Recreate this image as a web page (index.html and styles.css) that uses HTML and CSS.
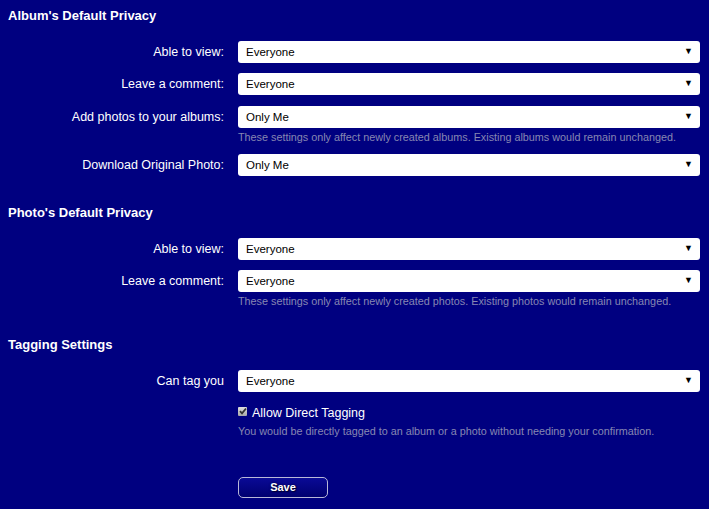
FILE: index.html
```html
<!DOCTYPE html>
<html>
<head>
<meta charset="utf-8">
<link rel="stylesheet" href="styles.css">
</head>
<body>
<div class="page">
  <section class="section">
    <h2 class="title">Album's Default Privacy</h2>
    <div class="form">
      <div class="label">Able to view:</div>
      <div class="field"><div class="select"><span>Everyone</span><span class="arrow">▼</span></div></div>
      <div class="label">Leave a comment:</div>
      <div class="field"><div class="select"><span>Everyone</span><span class="arrow">▼</span></div></div>
      <div class="label">Add photos to your albums:</div>
      <div class="field"><div class="select"><span>Only Me</span><span class="arrow">▼</span></div>
        <div class="help">These settings only affect newly created albums. Existing albums would remain unchanged.</div></div>
      <div class="label">Download Original Photo:</div>
      <div class="field"><div class="select"><span>Only Me</span><span class="arrow">▼</span></div></div>
    </div>
  </section>
  <section class="section">
    <h2 class="title">Photo's Default Privacy</h2>
    <div class="form">
      <div class="label">Able to view:</div>
      <div class="field"><div class="select"><span>Everyone</span><span class="arrow">▼</span></div></div>
      <div class="label">Leave a comment:</div>
      <div class="field"><div class="select"><span>Everyone</span><span class="arrow">▼</span></div>
        <div class="help">These settings only affect newly created photos. Existing photos would remain unchanged.</div></div>
    </div>
  </section>
  <section class="section">
    <h2 class="title">Tagging Settings</h2>
    <div class="form">
      <div class="label">Can tag you</div>
      <div class="field"><div class="select"><span>Everyone</span><span class="arrow">▼</span></div></div>
      <div class="label"></div>
      <div class="field">
        <div class="check-row"><span class="checkbox"><svg width="8" height="8" viewBox="0 0 8 8"><path d="M1 4.2 L3 6.3 L7 1.5" fill="none" stroke="#333" stroke-width="1.8"/></svg></span><span>Allow Direct Tagging</span></div>
        <div class="help help-check">You would be directly tagged to an album or a photo without needing your confirmation.</div>
      </div>
    </div>
  </section>
  <div class="actions">
    <button class="save">Save</button>
  </div>
</div>
</body>
</html>
```
FILE: styles.css
```css
html, body {
  margin: 0;
  padding: 0;
  background: #000080;
}
body {
  font-family: "Liberation Sans", Arial, sans-serif;
  color: #ffffff;
}
.page {
  padding: 8px 9px 0 8px;
}
.section {
  margin-bottom: 29px;
}
.title {
  margin: 0 0 16.5px 0;
  font-size: 13px;
  font-weight: bold;
  line-height: 16px;
  color: #ffffff;
}
.form {
  display: grid;
  grid-template-columns: 216px 1fr;
  column-gap: 14px;
  row-gap: 10.5px;
}
.label {
  text-align: right;
  font-size: 12.5px;
  line-height: 22px;
  color: #ffffff;
}
.select {
  position: relative;
  height: 22px;
  background: #ffffff;
  border-radius: 3px;
  color: #000000;
  font-size: 11.5px;
  line-height: 22px;
  padding-left: 8px;
}
.arrow {
  position: absolute;
  right: 7px;
  top: 0;
  font-size: 9px;
  line-height: 21px;
  color: #000;
}
.help {
  margin-top: 2px;
  font-size: 10.8px;
  line-height: 14px;
  color: #8787b2;
}
.help-check {
  margin-top: 3px;
}
.check-row {
  display: flex;
  align-items: center;
  gap: 5px;
  margin-top: 2.5px;
  font-size: 12.5px;
  line-height: 16px;
  color: #ffffff;
}
.checkbox {
  width: 9px;
  height: 9px;
  background: linear-gradient(#e0e0e0, #a8a8a8);
  border-radius: 1px;
  display: flex;
  align-items: center;
  justify-content: center;
  margin-top: -3px;
}
.actions {
  padding-left: 230px;
  padding-top: 10px;
}
.save {
  width: 90px;
  height: 21px;
  border: 1px solid #b8b8d8;
  border-radius: 5px;
  background: linear-gradient(#0a0a96, #000070);
  color: #ffffff;
  font-family: "Liberation Sans", Arial, sans-serif;
  font-size: 11px;
  font-weight: bold;
  text-shadow: 0 0 2px #000033, 1px 1px 1px #000033;
  padding: 0;
}
```
